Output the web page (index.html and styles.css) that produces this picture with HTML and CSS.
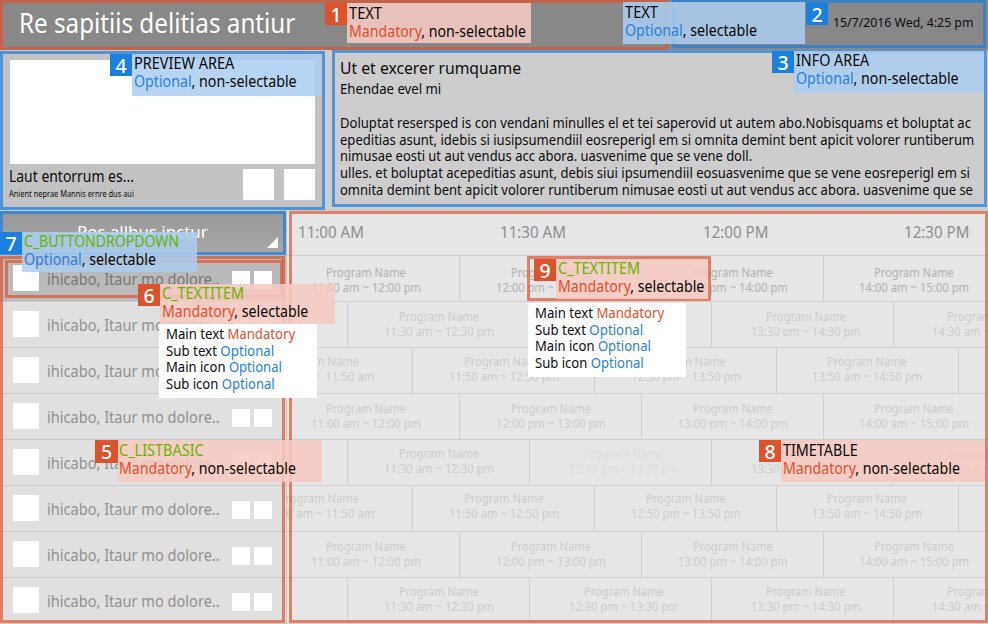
FILE: index.html
```html
<!DOCTYPE html>
<html lang="en">
<head>
<meta charset="utf-8">
<title>Program guide</title>
<link rel="stylesheet" href="styles.css">
</head>
<body>
<div class="screen">
  <header class="topbar">
    <span class="title"><span class="fit" data-w="276">Re sapitiis delitias antiur</span></span>
    <span class="date"><span class="fit" data-w="140">15/7/2016 Wed, 4:25 pm</span></span>
  </header>
  <section class="summary">
    <div class="preview">
      <div class="video"></div>
      <div class="caption">
        <div class="names">
          <span class="name"><span class="fit" data-w="125">Laut entorrum es...</span></span>
          <span class="sub"><span class="fit" data-w="125">Anient neprae Mannis ernre dus aui</span></span>
        </div>
        <i class="thumb"></i><i class="thumb"></i>
      </div>
    </div>
    <div class="info">
      <h1><span class="fit" data-w="181">Ut et excerer rumquame</span></h1>
      <h2><span class="fit" data-w="101">Ehendae evel mi</span></h2>
      <p><span class="fit" data-w="631">Doluptat resersped is con vendani minulles el et tei saperovid ut autem abo.Nobisquams et boluptat ac</span></p>
      <p><span class="fit" data-w="634">epeditias asunt, idebis si iusipsumendiil eosreperigl em si omnita demint bent apicit volorer runtiberum</span></p>
      <p><span class="fit" data-w="412">nimusae eosti ut aut vendus acc abora. uasvenime que se vene doll.</span></p>
      <p><span class="fit" data-w="630">ulles. et boluptat acepeditias asunt, debis siui ipsumendiil eosuasvenime que se vene eosreperigl em si</span></p>
      <p><span class="fit" data-w="633">omnita demint bent apicit volorer runtiberum nimusae eosti ut aut vendus acc abora. uasvenime que se</span></p>
    </div>
  </section>
  <section class="guide">
    <div class="channels">
      <div class="dropdown"><span class="fit" data-w="131">Pos allbus inctur</span><i class="caret"></i></div>
      <div id="list"></div>
    </div>
    <div class="timetable">
      <div class="hours">
        <span><span class="fit" data-w="66">11:00 AM</span></span>
        <span><span class="fit" data-w="66">11:30 AM</span></span>
        <span><span class="fit" data-w="65">12:00 PM</span></span>
        <span><span class="fit" data-w="65">12:30 PM</span></span>
      </div>
      <div id="rows"></div>
    </div>
  </section>

  <div class="frame red f1"></div>
  <div class="frame blue f2"></div>
  <div class="frame blue f3"></div>
  <div class="frame blue f4"></div>
  <div class="frame red f5"></div>
  <div class="frame red f6"></div>
  <div class="frame blue f7"></div>
  <div class="frame red f8"></div>
  <div class="frame red f9"></div>

  <div class="note red n1"><b>1</b><div><p><span class="fit" data-w="33">TEXT</span></p><p><span class="fit" data-w="177"><em>Mandatory</em>, non-selectable</span></p></div></div>
  <div class="note blue flip n2"><b>2</b><div><p><span class="fit" data-w="33">TEXT</span></p><p><span class="fit" data-w="132"><em>Optional</em>, selectable</span></p></div></div>
  <div class="note blue n3"><b>3</b><div><p><span class="fit" data-w="73">INFO AREA</span></p><p><span class="fit" data-w="163"><em>Optional</em>, non-selectable</span></p></div></div>
  <div class="note blue n4"><b>4</b><div><p><span class="fit" data-w="100">PREVIEW AREA</span></p><p><span class="fit" data-w="163"><em>Optional</em>, non-selectable</span></p></div></div>
  <div class="note red n5"><b>5</b><div><p class="comp"><span class="fit" data-w="85">C_LISTBASIC</span></p><p><span class="fit" data-w="177"><em>Mandatory</em>, non-selectable</span></p></div></div>
  <div class="note red n6"><b>6</b><div><p class="comp"><span class="fit" data-w="82">C_TEXTITEM</span></p><p><span class="fit" data-w="146"><em>Mandatory</em>, selectable</span></p></div></div>
  <div class="note blue n7"><b>7</b><div><p class="comp"><span class="fit" data-w="155">C_BUTTONDROPDOWN</span></p><p><span class="fit" data-w="132"><em>Optional</em>, selectable</span></p></div></div>
  <div class="note red n8"><b>8</b><div><p><span class="fit" data-w="75">TIMETABLE</span></p><p><span class="fit" data-w="177"><em>Mandatory</em>, non-selectable</span></p></div></div>
  <div class="note red n9"><b>9</b><div><p class="comp"><span class="fit" data-w="82">C_TEXTITEM</span></p><p><span class="fit" data-w="146"><em>Mandatory</em>, selectable</span></p></div></div>

  <div class="parts p6">
    <p><span class="fit" data-w="129">Main text <em class="must">Mandatory</em></span></p>
    <p><span class="fit" data-w="108">Sub text <em>Optional</em></span></p>
    <p><span class="fit" data-w="116">Main icon <em>Optional</em></span></p>
    <p><span class="fit" data-w="109">Sub icon <em>Optional</em></span></p>
  </div>
  <div class="parts p9">
    <p><span class="fit" data-w="129">Main text <em class="must">Mandatory</em></span></p>
    <p><span class="fit" data-w="108">Sub text <em>Optional</em></span></p>
    <p><span class="fit" data-w="116">Main icon <em>Optional</em></span></p>
    <p><span class="fit" data-w="109">Sub icon <em>Optional</em></span></p>
  </div>
</div>
<script src="main.js"></script>
</body>
</html>
```
FILE: styles.css
```css
* { box-sizing: border-box; margin: 0; padding: 0; }
body { width: 988px; height: 624px; overflow: hidden; font-family: "Noto Sans", sans-serif; color: #0c0c0c; background: #cdcdcd; }
em { font-style: normal; }
.fit { display: inline-block; white-space: nowrap; transform-origin: 0 50%; }
.screen { position: relative; width: 988px; height: 624px; overflow: hidden; display: flex; flex-direction: column; }

.topbar { height: 50px; flex: none; background: #888; display: flex; justify-content: space-between; padding: 0 15px 0 19px; }
.title { color: #fff; font-size: 27px; line-height: 45px; width: 275px; }
.date { font-size: 13px; line-height: 44px; width: 140px; }

.summary { height: 160px; flex: none; display: flex; gap: 8px; }
.preview { width: 324px; margin-top: 1px; background: #c2c2c2; padding: 9px 9px 0 10px; }
.video { height: 104px; width: 305px; background: #fff; }
.caption { display: flex; gap: 10px; padding-top: 5px; width: 305px; }
.names { flex: 1; min-width: 0; display: flex; flex-direction: column; margin: -1px 0 0 -1px; }
.name { font-size: 15.5px; line-height: 16px; }
.sub { font-size: 9.5px; line-height: 20px; }
.thumb { width: 31px; height: 31px; background: #fff; }
.info { flex: 1; min-width: 0; padding: 8px 0 0 8px; }
.info h1 { font-weight: 400; font-size: 16.5px; line-height: 20px; height: 20px; }
.info h2 { font-weight: 400; font-size: 15px; line-height: 20px; height: 36px; }
.info p { font-size: 15px; line-height: 16.7px; height: 16.7px; }

.guide { flex: 1; min-height: 0; display: flex; margin-top: 1px; overflow: hidden; }
.channels { width: 287px; border-right: 1px solid #c4c4c4; background: #e0e0e0; }
.dropdown { position: relative; height: 44px; background: linear-gradient(#989898, #a8a8a8); color: #fff; font-size: 17px; line-height: 42px; padding-left: 77px; }
.caret { position: absolute; left: 267px; top: 26px; width: 11px; height: 11px; background: #fff; clip-path: polygon(100% 0, 100% 100%, 0 100%); }
.channel { height: 46px; display: flex; align-items: flex-start; padding: 9px 14px 0 13px; border-bottom: 1px solid #cbcbcb; color: #919191; font-size: 16px; }
.channel.on { height: 47px; padding-top: 10px; background: #bababa; color: #777; }
.channel .icon { width: 26px; height: 26px; background: #fff; margin-right: 8px; flex: none; }
.channel .text { width: 185px; flex: none; line-height: 28px; }
.channel .mini { width: 18px; height: 18px; background: #fff; margin: 6px 4px 0 0; flex: none; }
.timetable { flex: 1; min-width: 0; background: #e6e6e6; overflow: hidden; }
.hours { height: 45px; border-bottom: 1px solid #d0d0d0; display: grid; grid-template-columns: 202px 202.5px 201.5px 80px; padding-left: 11px; font-size: 16.5px; line-height: 42px; color: #8e8e8e; }
.row { height: 46px; border-bottom: 1px solid #d0d0d0; display: flex; color: #cdcdcd; }
.row.now { color: #b3b3b3; }
.cell { width: 182px; flex: none; border-right: 1px solid #d0d0d0; font-size: 12.5px; line-height: 15px; }
.cell.faded { color: #dcdcdc; }
.cell p { height: 15px; }
.cell .name-line { padding-left: 15px; font-size: 12.5px; line-height: 15px; }

.frame { position: absolute; border: 3px solid; }
.frame.red { border-color: rgba(221, 84, 48, .7); }
.frame.blue { border-color: rgba(27, 127, 221, .7); }
.f1 { left: 0; top: 0; width: 668px; height: 50px; }
.f2 { left: 672px; top: 0; width: 314px; height: 48px; }
.f3 { left: 332px; top: 50px; width: 655px; height: 157px; }
.f4 { left: 0; top: 51px; width: 325px; height: 159px; }
.f5 { left: 0; top: 256px; width: 285px; height: 367px; }
.f6 { left: 5px; top: 260px; width: 278px; height: 38px; }
.f7 { left: 0; top: 211px; width: 286px; height: 44px; }
.f8 { left: 289px; top: 211px; width: 699px; height: 412px; }
.f9 { left: 527px; top: 256px; width: 184px; height: 45px; }

.note { position: absolute; display: flex; align-items: flex-start; }
.note.flip { flex-direction: row-reverse; }
.note b { width: 22px; height: 22px; flex: none; color: #fff; font-weight: 500; font-size: 19.5px; line-height: 24px; text-align: center; }
.note div { flex: 1; min-width: 0; height: 100%; padding: 1px 0 0 2px; font-size: 15.5px; line-height: 18px; }
.note p { height: 18px; color: #080808; }
.note p.comp { color: #68b300; }
.note.red b { background: #dc522c; }
.note.blue b { background: #1b7fdd; }
.note.red div { background: rgba(246, 202, 194, .88); }
.note.blue div { background: rgba(171, 206, 240, .86); }
.note.red em, .must { color: #dc522c; }
.note.blue em { color: #2a80dc; }
.n1 { left: 325px; top: 3px; width: 206px; height: 40px; }
.n2 { left: 623px; top: 2px; width: 205px; height: 42px; }
.n2 b { margin: 1px 0 0 1px; }
.n3 { left: 772px; top: 51px; width: 212px; height: 42px; }
.note.n3 div { padding-top: 0; }
.n4 { left: 110px; top: 54px; width: 212px; height: 42px; }
.note.n4 div { padding-top: 0; }
.n5 { left: 95px; top: 440px; width: 227px; height: 42px; }
.n5 b { width: 23px; height: 23px; }
.note.n5 div { padding-left: 1px; }
.n6 { left: 138px; top: 284px; width: 197px; height: 40px; }
.note.n6 div { padding-top: 0; }
.n7 { left: 0; top: 232px; width: 197px; height: 40px; }
.note.n7 div { padding-top: 0; }
.n8 { left: 759px; top: 440px; width: 226px; height: 42px; }
.n9 { left: 534px; top: 259px; width: 174px; height: 40px; }
.note.n9 div { padding-top: 0; }

.parts { position: absolute; width: 158px; height: 74px; background: #fff; padding: 1px 0 0 7px; font-size: 14.5px; }
.parts p { height: 16.7px; line-height: 16.7px; }
.parts em { color: #2a80dc; }
.parts em.must { color: #dc522c; }
.p6 { left: 159px; top: 324px; }
.p9 { left: 528px; top: 303px; }
```
FILE: main.js
```js
const list = document.getElementById('list');
for (let i = 0; i < 8; i++) {
  list.insertAdjacentHTML('beforeend',
    `<div class="channel${i ? '' : ' on'}"><i class="icon"></i><span class="text"><span class="fit" data-w="173">ihicabo, Itaur mo dolore..</span></span><i class="mini"></i><i class="mini"></i></div>`);
}

// x: left edge of the first cell, relative to the timetable
const kinds = {
  A: { x: -10, cells: [['11:00 am ~ 12:00 pm', 310], ['12:00 pm ~ 13:00 pm', 495], ['13:00 pm ~ 14:00 pm', 677], ['14:00 am ~ 15:00 pm', 858]] },
  B: { x: -122, cells: [['', 0], ['11:30 am ~ 12:30 pm', 383], ['12:30 pm ~ 13:30 pm', 568], ['13:30 pm ~ 14:30 pm', 750], ['14:30 am ~ 15:30 pm', 931]] },
  C: { x: -57, cells: [['10:50 am ~ 11:50 am', 263], ['11:50 am ~ 12:50 pm', 448], ['12:50 pm ~ 13:50 pm', 630], ['13:50 am ~ 14:50 pm', 811], ['', 0]] }
};
const rows = document.getElementById('rows');
const tops = [9, 7, 6, 7, 6, 5, 7, 6];
'ABCABCAB'.split('').forEach((k, r) => {
  const kind = kinds[k];
  const cells = kind.cells.map(([time, start], c) => {
    if (!time) return '<div class="cell"></div>';
    const pad = start - (287 + kind.x + c * 182);
    const faded = r === 4 && c === 2 ? ' faded' : '';
    return `<div class="cell${faded}" style="padding:${tops[r]}px 0 0 ${pad}px"><p class="name-line"><span class="fit" data-w="80">Program Name</span></p><p><span class="fit" data-w="110">${time}</span></p></div>`;
  }).join('');
  rows.insertAdjacentHTML('beforeend', `<div class="row${r ? '' : ' now'}" style="margin-left:${kind.x + 1}px">${cells}</div>`);
});

document.querySelectorAll('.fit').forEach(el => {
  el.style.transform = `scaleX(${el.dataset.w / el.offsetWidth})`;
});
```
